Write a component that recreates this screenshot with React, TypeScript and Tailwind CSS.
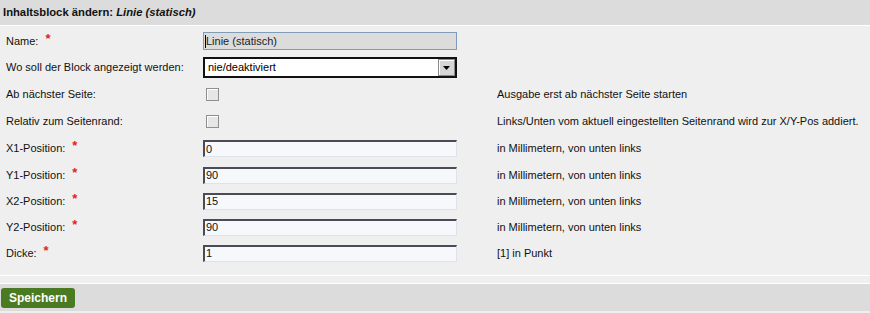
import React from "react";

const font = { fontFamily: '"Liberation Sans", Arial, sans-serif' };

function Star() {
  return <span className="ml-[7px] text-[#e0241b] font-bold text-[13px] leading-none relative -top-[3px]">*</span>;
}

function TextField({ value }: { value: string }) {
  return (
    <div className="w-[254px] h-[17px] bg-[#f7f8fc] border-t-2 border-l-2 border-t-[#4b4b58] border-l-[#4b4b58] border-r border-b border-r-[#dfe2e8] border-b-[#dfe2e8] flex items-center pl-[1px] text-[11px] text-[#111]">
      {value}
    </div>
  );
}

function Check() {
  return (
    <span className="ml-[3px] inline-block w-[13px] h-[13px] border border-[#8f8f8f] bg-[#e6e6e6] shadow-[inset_1px_1px_0_#ffffff]" />
  );
}

type Row = {
  label: string;
  star?: boolean;
  field: React.ReactNode;
  hint?: string;
  h: string;
};

export default function App() {
  const rows: Row[] = [
    {
      label: "Name:",
      star: true,
      h: "h-[26px]",
      field: (
        <div className="w-[254px] h-[18px] bg-[#dcdcdc] border border-[#7f9db9] flex items-center pl-[1px] text-[11px] text-[#222]">
          <span className="w-px h-[13px] bg-black" />
          Linie (statisch)
        </div>
      ),
    },
    {
      label: "Wo soll der Block angezeigt werden:",
      h: "h-[27px]",
      field: (
        <div className="w-[254px] h-[21px] bg-white border-2 border-[#111] flex items-center justify-between text-[11px] text-black">
          <span className="pl-[3px]">nie/deaktiviert</span>
          <span className="w-[17px] h-[17px] bg-[#d6d6d6] border border-[#8a8a8a] shadow-[inset_1px_1px_0_#ffffff] flex items-center justify-center">
            <svg width="7" height="4" viewBox="0 0 7 4">
              <path d="M0 0h7L3.5 4z" fill="#000" />
            </svg>
          </span>
        </div>
      ),
    },
    { label: "Ab nächster Seite:", h: "h-[27px]", field: <Check />, hint: "Ausgabe erst ab nächster Seite starten" },
    {
      label: "Relativ zum Seitenrand:",
      h: "h-[27px]",
      field: <Check />,
      hint: "Links/Unten vom aktuell eingestellten Seitenrand wird zur X/Y-Pos addiert.",
    },
    { label: "X1-Position:", star: true, h: "h-[27px]", field: <TextField value="0" />, hint: "in Millimetern, von unten links" },
    { label: "Y1-Position:", star: true, h: "h-[26px]", field: <TextField value="90" />, hint: "in Millimetern, von unten links" },
    { label: "X2-Position:", star: true, h: "h-[26px]", field: <TextField value="15" />, hint: "in Millimetern, von unten links" },
    { label: "Y2-Position:", star: true, h: "h-[26px]", field: <TextField value="90" />, hint: "in Millimetern, von unten links" },
    { label: "Dicke:", star: true, h: "h-[26px]", field: <TextField value="1" />, hint: "[1] in Punkt" },
  ];

  return (
    <div className="w-[870px] h-[313px] bg-[#efefef] text-[11px] text-[#111]" style={font}>
      <div className="h-[26px] bg-[#dcdcdc] flex items-center pl-[3px] font-bold text-[11.25px] text-[#111] border-b border-white">
        Inhaltsblock ändern:&nbsp;<i>Linie (statisch)</i>
      </div>
      <div className="pt-[2px] pb-[9px] border-b border-white">
        {rows.map((r) => (
          <div key={r.label} className={`flex items-center ${r.h}`}>
            <div className="w-[203px] pl-[6px] flex items-center">
              {r.label}
              {r.star && <Star />}
            </div>
            <div className="w-[294px] flex items-center">{r.field}</div>
            <div className="whitespace-nowrap">{r.hint}</div>
          </div>
        ))}
      </div>
      <div className="h-[8px] border-b border-white" />
      <div className="h-[27px] bg-[#dcdcdc] flex items-center pl-[1px]">
        <button className="w-[74px] h-[20px] rounded-[3px] bg-[#4a7b22] text-white font-bold text-[12px] leading-none">
          Speichern
        </button>
      </div>
    </div>
  );
}
